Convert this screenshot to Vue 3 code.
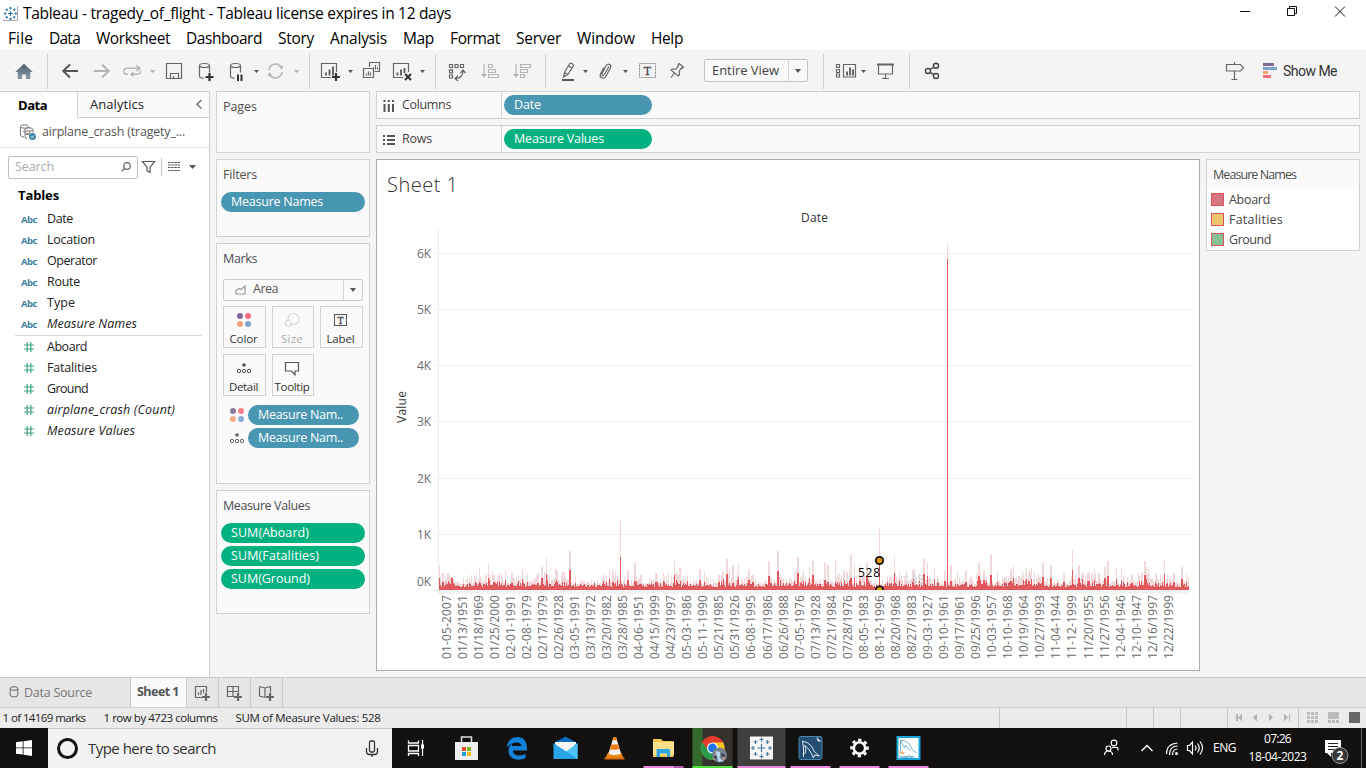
<script setup>
const vFit = {
  mounted(el, { value }) {
    const n = el.textContent.length
    const natural = el.getBoundingClientRect().width
    el.style.letterSpacing = `${(value - natural) / n}px`
  },
}

const menus = [
  ['File', 25], ['Data', 31], ['Worksheet', 74], ['Dashboard', 76], ['Story', 36], ['Analysis', 57],
  ['Map', 31], ['Format', 50], ['Server', 45], ['Window', 58], ['Help', 32],
]
const dimensions = [
  ['Date', 26], ['Location', 48], ['Operator', 50], ['Route', 33], ['Type', 28], ['Measure Names', 90, true],
]
const measures = [
  ['Aboard', 40], ['Fatalities', 50], ['Ground', 41], ['airplane_crash (Count)', 128, true], ['Measure Values', 88, true],
]
const sums = [['SUM(Aboard)', 78], ['SUM(Fatalities)', 88], ['SUM(Ground)', 79]]
const legend = [['Aboard', 41, 'red'], ['Fatalities', 54, 'yellow'], ['Ground', 42, 'mint']]

const ticks = [['6K', 253], ['5K', 309], ['4K', 365], ['3K', 421], ['2K', 478], ['1K', 534]]
const dates = ('01-05-2007 01/13/1951 01/18/1969 01/25/2000 02-01-1991 02-08-1979 02/17/1979 02/26/1928 03-05-1991 ' +
  '03/13/1972 03/20/1982 03/28/1985 04-06-1951 04/15/1999 04/23/1997 05-03-1986 05-11-1990 05/21/1985 05/31/1926 ' +
  '06-08-1995 06/17/1986 06/26/1988 07-05-1976 07/13/1928 07/21/1984 07/28/1976 08-05-1983 08-12-1996 08/20/1968 ' +
  '08/27/1983 09-03-1927 09-10-1961 09/17/1961 09/25/1996 10-03-1957 10-10-1968 10/19/1964 10/27/1993 11-04-1944 ' +
  '11-12-1999 11/20/1955 11/27/1956 12-04-1946 12-10-1947 12/16/1997 12/22/1999').split(' ')

// [x, height of pale area, height of solid area]
const peaks = [
  [439, 24, 12], [442, 17, 8], [451, 13, 12], [463, 12, 6], [479, 22, 8], [488, 26, 12], [493, 15, 8], [505, 20, 10],
  [511, 17, 7], [522, 22, 11], [527, 16, 8], [537, 15, 7], [541, 23, 12], [546, 32, 16], [555, 21, 8], [564, 14, 8],
  [569, 39, 20], [575, 14, 7], [620, 69, 33], [627, 19, 10], [634, 27, 9], [640, 15, 6], [655, 17, 8], [663, 18, 9],
  [674, 30, 15], [685, 12, 6], [699, 21, 10], [704, 18, 8], [718, 15, 8], [726, 31, 16], [732, 25, 7], [738, 26, 13],
  [748, 21, 10], [752, 15, 8], [768, 29, 14], [777, 39, 19], [797, 33, 17], [803, 20, 9], [809, 24, 12], [812, 29, 15],
  [824, 27, 10], [827, 25, 8], [835, 30, 8], [850, 35, 12], [854, 26, 12], [859, 24, 8], [866, 27, 14], [879, 61, 30],
  [894, 34, 17], [899, 18, 9], [923, 31, 16], [927, 28, 14], [934, 22, 11], [944, 19, 9], [950, 25, 9], [965, 19, 8],
  [978, 27, 14], [983, 19, 10], [990, 35, 15], [997, 18, 8], [1010, 21, 9], [1013, 24, 12], [1025, 18, 9], [1042, 27, 13],
  [1050, 25, 12], [1063, 17, 8], [1072, 40, 20], [1078, 25, 12], [1087, 17, 9], [1107, 29, 14], [1104, 23, 12],
  [1116, 22, 11], [1121, 22, 10], [1131, 15, 7], [1144, 29, 15], [1164, 30, 16], [1173, 17, 8], [1181, 23, 11], [1186, 16, 8],
]
let seed = 4723
const rand = () => (seed = (seed * 16807) % 2147483647) / 2147483647
const pale = []
const solid = []
for (let x = 439; x < 1189; x += 1) {
  const wave = 0.75 + 0.35 * Math.sin(x / 9.5) + 0.25 * Math.sin(x / 3.7)
  const h = 5.5 + Math.pow(rand(), 1.2) * 14 * wave
  pale.push(`M${x} 590v${-Math.round(h)}h1V590`)
  solid.push(`M${x} 590v${-Math.round(2 + h * (0.12 + rand() * 0.38))}h1V590`)
}
for (const [x, a, b] of peaks) {
  const w = a % 2 && a < 60 ? 2 : 1
  pale.push(`M${x} 590v${-a}h${w}V590`)
  solid.push(`M${x} 590v${-b}h${w}V590`)
}
const palePath = pale.join('')
const solidPath = solid.join('')

const burst = [[0, 0, 4], [-6, -6, 2], [6, -6, 2], [-6, 6, 2], [6, 6, 2], [0, -8.5, 2], [0, 8.5, 2], [-8.5, 0, 2], [8.5, 0, 2]]
const burstPath = burst.map(([x, y, r]) => `M${x - r} ${y}h${2 * r}M${x} ${y - r}v${2 * r}`).join('')
</script>

<template>
  <div class="app">
    <header class="titlebar">
      <svg class="logo" viewBox="-12 -12 24 24"><rect x="-12" y="-12" width="24" height="24" fill="#fff" /><path d="M-12 11.3H11.3V-12" fill="none" stroke="#999" stroke-width="1.4" /><path :d="burstPath" stroke="#2b7ea8" stroke-width="1.9" /></svg>
      <span v-fit="428" class="title">Tableau - tragedy_of_flight - Tableau license expires in 12 days</span>
      <svg class="wincontrols" viewBox="1230 0 130 26" width="130" height="26" fill="none" stroke="#111"><path d="M1240 11.5h10M1287.500 8.500h7v7h-7zM1289.500 8v-1.500h7v7h-1.500" /><path d="M1335 6.500l10 10M1345 6.500l-10 10" /></svg>
    </header>
    <nav class="menu"><span v-for="[m, w] in menus" :key="m" v-fit="w">{{ m }}</span></nav>

    <div class="toolbar">
      <svg viewBox="0 50 47 41" width="47" height="41"><defs><linearGradient id="hg" x2="0" y2="1"><stop offset="0" stop-color="#4f5d6e" /><stop offset="1" stop-color="#8b97a3" /></linearGradient></defs><path d="M24 63.800L32.800 72H30.300v7H26v-4.500h-4V79h-4.300v-7h-2.500z" fill="url(#hg)" /></svg>
      <i class="bar"></i>
      <svg viewBox="48 50 261 41" width="261" height="41" fill="none" stroke="#666" stroke-width="1.200">
        <path d="M78 71H63.500M70 64.500L63.300 71l6.700 6.500" stroke-width="2" stroke="#555" />
        <path d="M94 71h14.500M102 64.500l6.700 6.500-6.700 6.500" stroke-width="2" stroke="#b4b4b4" />
        <path d="M128 74.200h-1.200a3 3 0 0 1 0-6h12.500M136.500 65.300l3.300 2.900-3.300 2.900M140.500 70.500q.3 3.700-3.500 3.700h-5M133.500 72l-2.500 2.200 2.500 2.200" stroke="#b4b4b4" stroke-width="1.400" />
        <path d="M166.500 63.500h15v15h-15zM170.500 78.500v-5h8v5M173.500 76v2.500" />
        <ellipse cx="204.500" cy="65.500" rx="5" ry="2" /><path d="M199.500 65.500v10.500q0 2 4 2.300M209.500 65.500v7" />
        <path d="M205.500 77h8M209.500 73v8" stroke="#333" stroke-width="2.200" />
        <ellipse cx="235.500" cy="65.500" rx="5" ry="2" /><path d="M230.500 65.500v10.500q0 2 4 2.300M240.500 65.500v7" />
        <path d="M238 74.500v6.500M241.500 74.500v6.500" stroke="#333" stroke-width="2" />
        <path d="M269 70a6.700 6.700 0 0 1 12-3.300M282 72a6.700 6.700 0 0 1-12 3.300" stroke="#b4b4b4" stroke-width="1.500" /><path d="M283.500 66h-4.500l2.500 4zM267.500 76h4.500l-2.500-4z" fill="#b4b4b4" stroke="none" />
        <path d="M150 70h5l-2.500 3zM294 70h5l-2.500 3z" fill="#b4b4b4" stroke="none" /><path d="M254 70h5l-2.500 3z" fill="#555" stroke="none" />
      </svg>
      <i class="bar"></i>
      <svg viewBox="310 50 125 41" width="125" height="41" fill="none" stroke="#666" stroke-width="1.200">
        <path d="M331 77.500h-9.500v-14h15v8.500" /><path d="M326 75.500v-3M329.500 75.500v-6M333 75.500v-9" stroke-width="2" /><path d="M332 77h8M336 73v8" stroke="#333" stroke-width="2.200" />
        <path d="M369.500 67v-4.500h10v9h-5M363.500 68.500h10v9h-10zM366.500 75.500v-2M368.500 75.500v-4M370.500 75.500v-3M373.500 69.500v-2M375.500 69.500v-4.500M377.500 69.500v-2" />
        <path d="M403 77.500h-9.500v-14h15v8.500" /><path d="M397.500 75.500v-3M401 75.500v-6M404.500 73v-5" stroke-width="2" /><path d="M405 74l6 6M411 74l-6 6" stroke="#333" stroke-width="2" />
        <path d="M348 70h5l-2.500 3zM420 70h5l-2.500 3z" fill="#555" stroke="none" />
      </svg>
      <i class="bar"></i>
      <svg viewBox="436 50 109 41" width="109" height="41" fill="none" stroke="#666" stroke-width="1.200">
        <path d="M449.500 64.500h3v3h-3zM455 64.500h3v3h-3zM460.500 64.500h3v3h-3zM449.500 69.800h3v3h-3zM449.500 75h3v3h-3z" />
        <path d="M463 71q0 7-7.500 7.500M460.500 73l2.500-3 2.500 3M458 75.800l-3 2.700 3 2.500" />
        <g stroke="#b4b4b4"><path d="M484 64v12M516 64v12M488.500 64.500h4v3h-4zM488.500 69.500h7v3h-7zM488.500 74.500h10v3h-10zM520.500 64.500h10v3h-10zM520.500 69.500h7v3h-7zM520.500 74.500h4v3h-4z" /><path d="M481 74h6l-3 4zM513 74h6l-3 4z" fill="#b4b4b4" stroke="none" /></g>
      </svg>
      <i class="bar"></i>
      <svg viewBox="546 50 158 41" width="158" height="41" fill="none" stroke="#666" stroke-width="1.200">
        <path d="M563.500 77l1-4.500 5-8.500q1-1.300 2.500-.5t1.500 2.300l-5.500 8.500zM564.500 72.500l3.500 2M568.500 66l3.500 2" /><path d="M562 80h12" stroke-width="2" stroke="#555" />
        <path d="M609 66.500l-4.500 8q-1 1.500-2 1t-.5-2l4-7.500q1.500-2.500 3.500-1.500t1 3.500l-5 9q-1.500 2-3.800.8t-1.200-3.800l3.500-6.500" />
        <rect x="639.500" y="63.500" width="16" height="14" stroke="#888" stroke-width="1" stroke-dasharray="2 1" />
        <path d="M679 63.500l4.500 3.500-1.500 1.500-.5-.5-2.500 3.500.5 3-1.500 1.500-7-6 1.500-1 3 .3 3-3.300-.5-.5zM674 73.500l-3 4" />
        <text x="647.500" y="75" text-anchor="middle" class="serif">T</text>
        <path d="M583 70h5l-2.500 3zM623 70h5l-2.500 3z" fill="#555" stroke="none" />
      </svg>
      <div class="viewsel"><span v-fit="67">Entire View</span><i class="caretbox"><i class="caret"></i></i></div>
      <i class="bar gap15"></i>
      <svg viewBox="824 50 85 41" width="85" height="41" fill="none" stroke="#666" stroke-width="1.200">
        <path d="M836.500 64.500h3v3h-3zM836.500 69.500h3v3h-3zM836.500 74h3v3h-3zM843.500 64.500h12v12.500h-12z" /><path d="M847 75.500v-4M850 75.500v-8M853 75.500v-6" stroke-width="2" />
        <path d="M861 70h5l-2.500 3z" fill="#555" stroke="none" /><path d="M877 64.500h17" stroke-width="2" /><path d="M878.500 65v9h14v-9M885.500 74v4M882 78.500h7" />
      </svg>
      <i class="bar"></i>
      <svg viewBox="910 50 40 41" width="40" height="41" fill="none" stroke="#444" stroke-width="1.400"><circle cx="936" cy="65.800" r="2.500" /><circle cx="928" cy="71" r="2.500" /><circle cx="936" cy="76" r="2.500" /><path d="M930.200 69.500l3.600-2.300M930.200 72.400l3.600 2.200" /></svg>
      <div class="showme">
        <svg viewBox="1220 50 60 41" width="60" height="41"><path d="M1226.500 64.500h14l3 3.300-3 3.200h-14zM1234.500 62v2.500M1234.500 71v8.500M1231.500 79.500h6" fill="none" stroke="#666" stroke-width="1.200" /><path d="M1263 63h11v3h-11z" fill="#7f6996" /><path d="M1263 67h14v3h-14z" fill="#7ea3c9" /><path d="M1263 71h5v3h-5z" fill="#f2a277" /><path d="M1263 75h8v3h-8z" fill="#fc6d7f" /></svg>
        <span v-fit="54">Show Me</span>
      </div>
    </div>

    <main class="work">
      <aside class="side">
        <div class="tabs"><b v-fit="29">Data</b><div class="analytics"><span v-fit="54">Analytics</span><svg width="8" height="12" viewBox="0 0 8 12"><path d="M6.500 1L2 5.300l4.500 4.300" fill="none" stroke="#666" stroke-width="1.300" /></svg></div></div>
        <div class="source">
          <svg viewBox="20 124 18 18" width="18" height="18" fill="none" stroke="#777"><ellipse cx="24.500" cy="126.500" rx="4" ry="1.700" /><path d="M20.500 126.500v8.500q0 2 3.500 2.200M28.500 126.500v1" /><ellipse cx="29" cy="129.500" rx="4" ry="1.700" /><path d="M25 129.500v7q0 2 2 2.200M33 129.500v3M23 131l6 3.500M26 134.500h3.500v-3" /><circle cx="32.500" cy="136.500" r="3.500" fill="#3f86a8" stroke="none" /><path d="M30.800 136.500l1.300 1.300 2.300-2.600" stroke="#fff" /></svg>
          <span v-fit="143">airplane_crash (tragety_...</span>
        </div>
        <div class="searchrow">
          <div class="search"><span v-fit="39">Search</span><svg width="12" height="12" viewBox="0 0 12 12" fill="none" stroke="#666" stroke-width="1.200"><circle cx="7" cy="5" r="3.300" /><path d="M4.500 7.500L1.500 10.500" /></svg></div>
          <svg viewBox="141 155 60 24" width="60" height="24" fill="none" stroke="#555" stroke-width="1.200"><path d="M142.500 161.500h12l-4.500 6v5l-3 -1.800v-3.200z" /><path d="M161.500 158v18" stroke="#ccc" /><path d="M168 162.500h12M168 165h12M168 167.500h12M168 170.500h12" stroke-dasharray="2.500 .7" /><path d="M189 165h7l-3.500 4z" fill="#555" stroke="none" /></svg>
        </div>
        <b class="tables"><span v-fit="41">Tables</span></b>
        <div v-for="[n, w, it] in dimensions" :key="n" class="field"><small v-fit="16">Abc</small><span v-fit="w" :class="{ it }">{{ n }}</span></div>
        <hr />
        <div v-for="[n, w, it] in measures" :key="n" class="field"><svg width="10" height="10" viewBox="0 0 10 10"><path d="M0 3h10M0 7h10M3.200 0v10M6.800 0v10" stroke="#3fa37c" stroke-width="1.200" /></svg><span v-fit="w" :class="{ it }">{{ n }}</span></div>
      </aside>

      <section class="cards">
        <div class="card pages"><h3 v-fit="34">Pages</h3></div>
        <div class="card filters"><h3 v-fit="34">Filters</h3><div class="pill blue"><span v-fit="92">Measure Names</span></div></div>
        <div class="card marks">
          <h3 v-fit="34">Marks</h3>
          <div class="marktype"><svg width="12" height="10" viewBox="0 0 12 10"><path d="M1 9V5.500l3-2 2 1L10 1v8z" fill="none" stroke="#999" stroke-width="1.200" /></svg><span v-fit="25">Area</span><i class="caretbox"><i class="caret"></i></i></div>
          <div class="buttons">
            <div class="btn"><svg viewBox="-10 -9 20 18"><circle cx="-4" cy="-4" r="3" fill="#7f6996" /><circle cx="4" cy="-4" r="3" fill="#fc6d7f" /><circle cx="-4" cy="4" r="3" fill="#f2a277" /><circle cx="4" cy="4" r="3" fill="#7ea3c9" /></svg><span v-fit="28">Color</span></div>
            <div class="btn off"><svg viewBox="-10 -9 20 18" fill="none" stroke="#d4d4d4" stroke-width="1.200"><circle cx="1.500" cy="-1" r="5.500" /><circle cx="-3.500" cy="3.500" r="3" fill="#fafafa" /></svg><span v-fit="22">Size</span></div>
            <div class="btn"><svg viewBox="-10 -9 20 18"><rect x="-6.500" y="-5.500" width="12" height="11" fill="none" stroke="#555" /><text x="-.5" y="3.500" text-anchor="middle" class="serif tiny">T</text></svg><span v-fit="28">Label</span></div>
            <div class="btn"><svg viewBox="-10 -9 20 18" fill="none" stroke="#555"><circle cy="-3" r="1.800" fill="#555" stroke="none" /><circle cx="-5" cy="3" r="1.700" /><circle cy="3" r="1.700" /><circle cx="5" cy="3" r="1.700" /></svg><span v-fit="29">Detail</span></div>
            <div class="btn"><svg viewBox="-10 -9 20 18"><path d="M-6.500 -5.500h13v8.500h-3.500v4l-3.500-4h-6z" fill="none" stroke="#555" stroke-width="1.200" /></svg><span v-fit="35">Tooltip</span></div>
          </div>
          <div class="enc"><svg viewBox="-10 -9 20 18"><circle cx="-4" cy="-4" r="3" fill="#8d799f" /><circle cx="4" cy="-4" r="3" fill="#fc7d8c" /><circle cx="-4" cy="4" r="3" fill="#f2ac87" /><circle cx="4" cy="4" r="3" fill="#8caecf" /></svg><div class="pill blue"><span v-fit="85">Measure Nam..</span></div></div>
          <div class="enc"><svg viewBox="-10 -9 20 18" fill="none" stroke="#666"><circle cy="-3" r="1.800" fill="#666" stroke="none" /><circle cx="-5" cy="3" r="1.700" /><circle cy="3" r="1.700" /><circle cx="5" cy="3" r="1.700" /></svg><div class="pill blue"><span v-fit="85">Measure Nam..</span></div></div>
        </div>
        <div class="card values"><h3 v-fit="87">Measure Values</h3><div v-for="[n, w] in sums" :key="n" class="pill green"><span v-fit="w">{{ n }}</span></div></div>
      </section>

      <section class="center">
        <div class="shelf"><div class="shelfname"><svg width="12" height="12" viewBox="0 0 12 12"><path d="M1.500 0v2M5.800 0v2M10 0v2M1.500 4v8M5.800 4v8M10 4v8" stroke="#555" stroke-width="2" /></svg><span v-fit="49">Columns</span></div><div class="pill blue"><span v-fit="27">Date</span></div></div>
        <div class="shelf"><div class="shelfname"><svg width="12" height="12" viewBox="0 0 12 12"><path d="M0 2h2M0 6h2M0 10h2M4 2h8M4 6h8M4 10h8" stroke="#555" stroke-width="1.800" /></svg><span v-fit="30">Rows</span></div><div class="pill green"><span v-fit="90">Measure Values</span></div></div>
        <div class="viewrow">
          <div class="sheet">
            <svg viewBox="377 160 822 510" width="822" height="510" class="chart">
              <text x="387" y="192" class="sheettitle" textLength="71">Sheet 1</text>
              <text x="801" y="222" class="axistitle" textLength="27">Date</text>
              <text transform="translate(406 423) rotate(-90)" class="axisname" textLength="32">Value</text>
              <g shape-rendering="crispEdges">
                <path d="M438.500 229V594" stroke="#ececec" />
                <path v-for="[l, y] in ticks" :key="l" :d="`M434 ${y + 0.5}H1190`" stroke="#f0f0f0" />
                <path d="M434 590.500h5" stroke="#ddd" /><rect x="439" y="590" width="751" height="4" fill="#f3f3f3" />
                <path :d="palePath" fill="#f1d8da" /><path :d="solidPath" fill="#e0575c" />
                <path d="M947.500 244v15" stroke="#f1d8da" /><path d="M947.500 259v331" stroke="#e0575c" />
              </g>
              <text x="903" y="584" class="ghost" textLength="21">148</text>
              <text v-for="[l, y] in ticks" :key="l" x="417" :y="y + 5" class="tick" textLength="14">{{ l }}</text>
              <text x="417" y="586" class="tick" textLength="14">0K</text>
              <text v-for="(d, i) in dates" :key="d" :transform="`translate(${450.5 + i * 16.05} 659) rotate(-90)`" class="tick" textLength="64">{{ d }}</text>
              <text x="858" y="577" class="marklabel" textLength="22">528</text>
              <circle cx="879.500" cy="560.500" r="3.700" fill="#e09a00" stroke="#111" stroke-width="1.800" />
              <path d="M875.800 590a3.700 3.700 0 0 1 7.400 0" fill="#e09a00" stroke="#111" stroke-width="1.800" />
            </svg>
          </div>
          <div class="legend"><h3 v-fit="89">Measure Names</h3><div v-for="[n, w, c] in legend" :key="n" class="key"><i :class="c"></i><span v-fit="w">{{ n }}</span></div></div>
        </div>
      </section>
    </main>

    <footer class="sheettabs">
      <div class="ds"><svg width="10" height="12" viewBox="0 0 10 12" fill="none" stroke="#666"><ellipse cx="5" cy="2.500" rx="3.800" ry="1.800" /><path d="M1.200 2.500v6.500q0 2 3.800 2t3.800-2v-6.500" /></svg><span v-fit="68">Data Source</span></div>
      <div class="active"><b v-fit="42">Sheet 1</b></div>
      <div class="new"><svg viewBox="0 0 18 18" fill="none" stroke="#666" stroke-width="1.200"><path d="M9 13.500H1.500v-11h11v6M4.500 11V8.500M7 11V6M9.500 9V5" /><path d="M8 13h8M12 9v8" stroke-width="2.200" /></svg></div>
      <div class="new"><svg viewBox="0 0 18 18" fill="none" stroke="#666" stroke-width="1.200"><path d="M9 12.500H1.500v-10h11v6M1.500 7.500h11M7 2.500v10" /><path d="M8 13h8M12 9v8" stroke-width="2.200" /></svg></div>
      <div class="new"><svg viewBox="0 0 18 18" fill="none" stroke="#666" stroke-width="1.200"><path d="M1.500 2.500l5.500 1.500 5.500-1.500v6M1.500 2.500v9.500l5.500 1.500M7 4v9.500" /><path d="M8 13h8M12 9v8" stroke-width="2.200" /></svg></div>
    </footer>
    <div class="status">
      <span v-fit="83">1 of 14169 marks</span><span v-fit="114">1 row by 4723 columns</span><span v-fit="145">SUM of Measure Values: 528</span>
      <svg viewBox="999 708 367 20" width="367" height="20" shape-rendering="crispEdges">
        <path d="M999.500 708v20M1126.500 708v20M1153.500 708v20M1180.500 708v20M1227.500 708v20M1298.500 708v20" stroke="#c8c8c8" />
        <path d="M1236 714h1.500v7h-1.500zM1242 714v7l-4-3.500zM1257 714v7l-4-3.500zM1269 714v7l4-3.500zM1284 714v7l4-3.500zM1288.500 714h1.500v7h-1.500z" fill="#b5b5b5" />
        <path d="M1307 713.500h11M1307 717.500h11M1307 721.500h11M1328 721.500h11" stroke="#bbb" stroke-width="3" stroke-dasharray="3 1" /><path d="M1328 712h11v7h-11z" fill="#bbb" /><path d="M1349 712h11v11h-11z" fill="#666" />
      </svg>
    </div>

    <div class="taskbar">
      <div class="start"><svg width="16" height="16" viewBox="0 0 16 16"><path d="M0 2.300L6.700 1.300V7.500H0zM7.500 1.200L16 0v7.500H7.500zM0 8.300h6.700v6.300L0 13.700zM7.500 8.300H16V16l-8.500-1.200z" fill="#fff" /></svg></div>
      <div class="tsearch"><i class="ring"></i><span v-fit="128">Type here to search</span><svg width="14" height="18" viewBox="0 0 14 18" fill="none" stroke="#333" stroke-width="1.300"><rect x="4.500" y="1" width="5" height="11" rx="1.500" /><path d="M1.500 8v3.500q0 3 3 3h5q3 0 3-3V8M7 14.500V17" /></svg></div>
      <div class="tasks">
        <svg viewBox="-24.500 -20 49 40" fill="none" stroke="#fff" stroke-width="1.300"><path d="M-8 -7.500v2.500h10v-2.500M-8 -2.500h10v5.500h-10zM-8 8v-2.500h10v2.500M6 -8v16" /><path d="M6 -3.500v4" stroke-width="3" /></svg>
        <svg viewBox="-24.500 -20 49 40"><path d="M-5 -5v-6h10v6" fill="none" stroke="#ddd" stroke-width="1.500" /><path d="M-11.500 -6h23v18h-23z" fill="#eee" /><path d="M-4.500 -1h4v4h-4z" fill="#e8502c" /><path d="M.5 -1h4v4h-4z" fill="#7cb81c" /><path d="M-4.500 4h4v4h-4z" fill="#1ba0e1" /><path d="M.5 4h4v4h-4z" fill="#fbb810" /></svg>
        <svg viewBox="-24.500 -20 49 40"><path d="M-10 0C-9 -7 -5 -11 1 -11c6 0 9.500 4.500 9.500 11v2.500H-3.500c0 3 2.500 5 6 5 2.500 0 5-.7 6.500-1.700v4.200c-2 1.200-4.500 1.700-7 1.700-6 0-10-3.700-10-8.700 0-4 2-7 5-8.500-1 1-1.600 2.300-1.700 3.500H5C5 -3 4 -5.500 0 -5.500c-4 0-8 2.500-10 5.500z" fill="#1381d8" /></svg>
        <svg viewBox="-24.500 -20 49 40"><path d="M-12 -4.500L0 -11 12 -4.500v4h-24z" fill="#0b5cab" /><path d="M-10.500 -6h21v2L2 4h-3l-9.500-8z" fill="#f5f5f5" /><path d="M-10 -6L0 -11.300 10 -6z" fill="#0b6cc0" /><path d="M-12 -4.500L1 3.500 12 -4.500v15.500h-24z" fill="#28a5e8" /><path d="M12 -4.500L1 3.500l11 7.500z" fill="#4fc3f5" /></svg>
        <svg viewBox="-24.500 -20 49 40"><path d="M-6.500 4.500h13l3 6.500H-9.500z" fill="#f08a16" /><path d="M-1 -11h2.500l5 16.500q-6.500 3-12.500 0z" fill="#f3f3f3" /><path d="M-1 -11h2.500l1 3.300h-4.500zM-3.300 -3.500h6.800l1.500 4.500q-5 1.500-9.800 0z" fill="#f07d10" /><path d="M-10 9.500h20v2h-20z" fill="#d86b08" /></svg>
        <svg viewBox="-24.500 -20 49 40"><path d="M-10.500 -9h8l2 2h10.500v16h-20.500z" fill="#f5c650" /><path d="M-10.500 -6h21v13h-21z" fill="#fde08c" /><path d="M-7 9V2q0-1 1-1H5.500q1 0 1 1v7h-3V5.500h-7V9z" fill="#2ea5e0" /><path d="M-20 18h31v2h-31z" fill="#ea87dc" /><path d="M11 18h9v2h-9z" fill="#b160a8" /></svg>
        <svg viewBox="-24.500 -20 49 40"><path d="M-20 -20h40v40h-40z" fill="#34302e" /><path d="M-20 -20h10v40h-10z" fill="#336a2c" /><path d="M-20 18h40v2h-40z" fill="#51df3e" /><circle r="12" fill="#e33b2e" /><path d="M0 0l12 0a12 12 0 0 1-12 12z" fill="#f6c416" /><path d="M0 -5.500h10.700A12 12 0 0 1 1 12l5-9z" fill="#f8c81c" /><path d="M-10.400 -6A12 12 0 0 0 0 12l5-9-9.500-1z" fill="#2a9a48" /><circle r="5.500" fill="#fff" /><circle r="4.400" fill="#1f73e8" /><circle cx="7" cy="7" r="7.500" fill="#77828d" /><path d="M3 3l5 1-1 6 4 3-5 1z" fill="#b5d9ee" /><path d="M8 4l5 4-3 1zM1 8l3 0 0 4z" fill="#3a3546" /><path d="M10 9l3 1-2 3zM2 5l2 1-1 2z" fill="#c49b8c" /></svg>
        <svg viewBox="-24.500 -20 49 40"><path d="M-24 -20h48v40h-48z" fill="#3f3f40" /><path d="M-24 18h48v2h-48z" fill="#ea87dc" /><path d="M-11.500 -11.500h23v23h-23z" fill="#f5f5f5" /><path :d="burstPath" stroke="#4a7fa3" stroke-width="1.200" /></svg>
        <svg viewBox="-24.500 -20 49 40"><rect x="-11.500" y="-11.500" width="23" height="23" rx="2" fill="#234d73" stroke="#4b86ad" /><path d="M-7 9V0l-1-7q5 1 9 5l3 6 5 4-5-1-1 3q-2-5-5-9l-4-4q2 3 1 7l-1 2" fill="none" stroke="#d8e6ef" /><path d="M6 -11l5 5-4-1z" fill="#eef" /><path d="M-20 18h40v2h-40z" fill="#ea87dc" /></svg>
        <svg viewBox="-24.500 -20 49 40"><circle r="5.700" fill="none" stroke="#fff" stroke-width="2.600" /><circle r="8" fill="none" stroke="#fff" stroke-width="2.600" stroke-dasharray="3.200 3.080" transform="rotate(-11)" /><path d="M-20 18h40v2h-40z" fill="#ea87dc" /></svg>
        <svg viewBox="-24.500 -20 49 40"><rect x="-11" y="-11" width="22" height="22" fill="#fff" stroke="#17a5d8" stroke-width="2" /><path d="M-8 3v-11q5 0 9 4l3 6 4 3M-8 -8l4 8 1-3 5 6" fill="none" stroke="#4f9fbd" stroke-width=".8" /><text x="-9" y="6" class="mini or">My</text><text x="-9" y="9.500" class="mini">Installer</text><path d="M-20 18h40v2h-40z" fill="#ea87dc" /></svg>
      </div>
      <svg class="tray" viewBox="1095 728 110 40" width="110" height="40" fill="none" stroke="#fff" stroke-width="1.200"><circle cx="1114" cy="743" r="2.800" /><circle cx="1108.500" cy="748.500" r="2.500" /><path d="M1104.500 755q0-4 4-4t4 4M1112 747.500l5.500 0q.5 1 .5 3" /><path d="M1141.500 751l5.500-5.500 5.500 5.500" stroke-width="1.400" /><path d="M1166.500 754q0-10 11-11M1169.500 755q0-9 8-9M1172.500 755q0-6 5-6" /><circle cx="1176.500" cy="753.500" r="1.500" fill="#fff" stroke="none" /><path d="M1187.500 745.500h2l3-3.500v12l-3-3.500h-2zM1195 745.500q2 2.500 0 5M1197.500 743.500q3.500 4.500 0 9M1200 741.500q5 6.500 0 13" /></svg>
      <span v-fit="23" class="eng">ENG</span>
      <div class="clock"><span v-fit="27">07:26</span><span v-fit="58">18-04-2023</span></div>
      <svg class="notif" viewBox="1318 728 48 40" width="48" height="40"><path d="M1325 740h16v13h-10v4l-4-4h-2z" fill="#fff" /><path d="M1328 743.500h10M1328 746.500h10M1328 749.500h7" stroke="#222" /><circle cx="1340" cy="755.500" r="8" fill="#36383a" stroke="#999" /><text x="1340" y="760" text-anchor="middle" class="badge">2</text><path d="M1361.500 728v40" stroke="#666" /></svg>
    </div>
  </div>
</template>

<style>
html, body { overflow: hidden; background: #f4f4f4; }
</style>
<style scoped>
* { box-sizing: border-box; }
.app { width: 1366px; height: 768px; display: flex; flex-direction: column; background: #f4f4f4; font: 12.5px/1 "Open Sans", "Noto Sans", sans-serif; color: #333; overflow: hidden; white-space: nowrap; }
svg { display: block; flex: none; }
i { display: block; font-style: normal; }
h3 { margin: 0; font-weight: 400; font-size: 12.5px; color: #4d4d4d; width: max-content; }
.titlebar { height: 26px; background: #fff; display: flex; align-items: center; padding: 0 6px 0 3px; font: 15.5px/1 "Open Sans", sans-serif; color: #000; }
.title { padding-top: 1px; }
.logo { width: 15px; height: 15px; margin-right: 5px; }
.wincontrols { margin-left: auto; }
.menu { height: 24px; background: #fff; display: flex; gap: 16px; padding: 5px 0 0 8px; font-size: 15.5px; color: #000; }
.toolbar { height: 41px; display: flex; }
.bar { width: 1px; height: 35px; margin-top: 4px; background: #d0d0d0; }
.gap15 { margin-left: 15px; }
.serif { font: 12px "Liberation Serif", serif; fill: #444; stroke: #444; stroke-width: .3px; }
.tiny { font-size: 10px; }
.viewsel { width: 104px; height: 23px; margin-top: 9px; border: 1px solid #c4c4c4; border-radius: 2px; display: flex; align-items: center; padding-left: 7px; background: #f8f8f8; font-size: 13px; color: #444; }
.caretbox { margin-left: auto; width: 19px; height: 100%; border-left: 1px solid #d4d4d4; display: flex; align-items: center; justify-content: center; }
.caret { border: 3.5px solid transparent; border-top: 4px solid #555; border-bottom: 0; }
.showme { margin-left: auto; width: 146px; display: flex; align-items: center; gap: 3px; font: 14px/1 Roboto, sans-serif; color: #333; }
.work { height: 586px; display: flex; }
.side { width: 210px; background: #fff; border: 1px solid #d0d0d0; border-left: 0; border-bottom: 0; }
.tabs { height: 26px; display: flex; align-items: center; padding-left: 18px; color: #000; font-size: 13px; }
.analytics { margin-left: 30px; flex: 1; height: 26px; background: #fafafa; border-left: 1px solid #d0d0d0; border-bottom: 1px solid #d0d0d0; display: flex; align-items: center; justify-content: space-between; padding: 0 6px 0 12px; color: #222; }
.source { height: 30px; border-bottom: 1px solid #e0e0e0; display: flex; align-items: center; gap: 4px; padding-left: 20px; color: #555; }
.searchrow { display: flex; margin: 7px 0 0 8px; align-items: center; gap: 3px; }
.search { width: 130px; height: 23px; border: 1px solid #c0c0c0; border-radius: 2px; display: flex; align-items: center; justify-content: space-between; padding: 0 5px 0 6px; color: #aaa; }
.tables { display: block; margin: 8px 0 0 18px; height: 22px; line-height: 16px; color: #000; font-size: 13px; }
.field { height: 21px; display: flex; align-items: center; padding-left: 47px; color: #222; }
.field small { margin-left: -26px; margin-right: 10px; font: bold 9.5px/1 "Open Sans", sans-serif; color: #3f7f9e; }
.field svg { margin: -1px 13px 0 -23px; }
.it { font-style: italic; }
hr { border: 0; height: 1px; background: #d8d8d8; margin: 0 7px 1px 15px; }
.cards { width: 154px; margin-left: 6px; display: flex; flex-direction: column; gap: 6px; }
.card { border: 1px solid #d2d2d2; background: #fafafa; padding: 9px 4px 0; }
.card h3 { margin-left: 2px; }
.pages { height: 62px; } .filters { height: 78px; } .marks { height: 241px; } .values { height: 124px; }
.pill { height: 20px; border-radius: 10px; color: #fff; font-weight: 500; display: flex; align-items: center; padding: 1px 0 0 10px; margin-bottom: 3px; }
.blue { background: #4996b2; } .green { background: #00b180; }
.filters .pill, .values .pill { width: 144px; }
.filters h3 + .pill, .values h3 + .pill { margin-top: 10px; }
.marktype { height: 22px; width: 140px; margin: 13px 0 5px 2px; border: 1px solid #ccc; border-radius: 2px; display: flex; align-items: center; padding-left: 11px; gap: 6px; color: #555; }
.buttons { display: grid; grid-template-columns: 43px 42px 43px; gap: 6px; margin-left: 2px; }
.btn { height: 42px; border: 1px solid #d2d2d2; display: flex; flex-direction: column; align-items: center; justify-content: space-between; padding: 4px 2px 2px 0; font-size: 11.5px; color: #333; }
.btn svg { width: 20px; height: 18px; } .off { color: #aaa; }
.enc { display: flex; height: 23px; align-items: flex-start; margin-left: 6px; gap: 1px; }
.buttons + .enc { margin-top: 9px; }
.enc svg { width: 20px; height: 18px; margin-top: 1px; } .enc .pill { width: 111px; }
.center { margin-left: 6px; width: 984px; display: flex; flex-direction: column; gap: 6px; }
.shelf { height: 28px; border: 1px solid #d2d2d2; background: #fafafa; display: flex; align-items: center; }
.shelfname { width: 125px; height: 26px; border-right: 1px solid #d2d2d2; display: flex; align-items: center; padding: 1px 0 0 6px; gap: 7px; color: #444; }
.shelf .pill { width: 148px; margin: 0 0 0 2px; }
.viewrow { display: flex; align-items: flex-start; gap: 6px; }
.sheet { width: 824px; height: 512px; border: 1px solid #adadad; background: #fff; }
.chart text { font-family: "Open Sans", sans-serif; font-size: 12px; fill: #6b6b6b; }
.chart .sheettitle { font-size: 20px; font-weight: 300; fill: #333; }
.chart .axistitle, .chart .axisname { font-weight: 500; fill: #333; }
.chart .marklabel { fill: #000; } .chart .ghost { fill: #d0d0d0; }
.legend { width: 154px; height: 92px; border: 1px solid #d2d2d2; background: linear-gradient(#fafafa 29px, #fff 29px); }
.legend h3 { box-sizing: content-box; height: 21px; padding: 9px 0 0 6px; }
.key { height: 20px; display: flex; align-items: center; gap: 5px; padding-left: 4px; color: #444; }
.key i { width: 13px; height: 13px; border: 1px solid #d9565c; margin-top: -1px; }
.red { background: #d67580; } .yellow { background: #efc670; } .mint { background: #8ac194; }
.sheettabs { height: 30px; background: #e6e6e6; border-top: 1px solid #cacaca; display: flex; }
.sheettabs div { border-right: 1px solid #c8c8c8; display: flex; align-items: center; }
.sheettabs .ds { width: 131px; padding: 1px 0 0 9px; gap: 5px; color: #777; } .ds svg { margin-top: -3px; }
.sheettabs .active { width: 56px; background: #fafafa; padding: 0 0 1px 6px; color: #555; }
.sheettabs .new { width: 32px; padding-left: 7px; } .new svg { width: 18px; height: 18px; }
.status { height: 21px; border-top: 1px solid #cfcfcf; background: #ebebeb; display: flex; align-items: center; padding-left: 2.5px; font-size: 11.5px; color: #222; gap: 18px; }
.status svg { margin-left: auto; }
.taskbar { height: 40px; background: #12110f; display: flex; align-items: center; color: #fff; }
.start { width: 48px; height: 40px; display: flex; align-items: center; justify-content: center; }
.tsearch { width: 344px; height: 40px; background: #f2f2f2; color: #333; display: flex; align-items: center; padding: 0 13px 0 9px; font-size: 15px; border-top: 1px solid #c8c8c8; }
.ring { width: 21px; height: 21px; border: 3px solid #111; border-radius: 50%; margin-right: 10px; }
.tsearch svg { margin-left: auto; }
.tasks { display: flex; } .tasks svg { width: 49px; height: 40px; }
.tasks svg:nth-child(2) { margin-left: 1px; } .tasks svg:nth-child(3) { margin-left: .5px; }
.tray { margin-left: auto; }
.eng { margin-left: 8px; font-size: 12px; }
.clock { width: 82px; display: flex; flex-direction: column; align-items: center; gap: 6px; font-size: 12px; padding-left: 1px; }
.mini { font: bold 3.5px "Open Sans", sans-serif; fill: #2b8db3; } .or { fill: #e8942c; }
.badge { font: bold 12px "Open Sans", sans-serif; fill: #fff; }
</style>
